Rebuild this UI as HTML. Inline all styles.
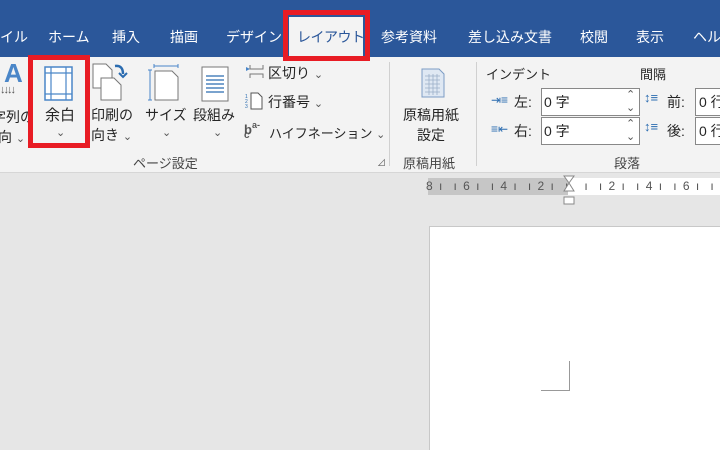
<!DOCTYPE html>
<html><head><meta charset="utf-8"><style>
*{margin:0;padding:0;box-sizing:border-box}
html,body{width:720px;height:450px;overflow:hidden}
body{position:relative;background:#e6e6e6;font-family:"Liberation Sans","Noto Sans CJK JP",sans-serif;color:#262626}
.a{position:absolute;white-space:nowrap}
.tab{position:absolute;top:27px;color:#fff;font-size:14px;line-height:20px;white-space:nowrap}
.t{font-size:14px;line-height:18px}
.s{font-size:13px}
.chev{font-size:11px;color:#555}
</style></head><body>
<div class="a" style="left:0;top:0;width:720px;height:57px;background:#2b579a"></div>
<div class="a" style="left:0;top:57px;width:720px;height:116px;background:#f3f3f3;border-bottom:1px solid #d6d6d6"></div>
<!-- tabs -->
<div class="tab" style="left:0">イル</div>
<div class="tab" style="left:48px">ホーム</div>
<div class="tab" style="left:112px">挿入</div>
<div class="tab" style="left:170px">描画</div>
<div class="tab" style="left:226px">デザイン</div>
<div class="a" style="left:289px;top:17px;width:74px;height:40px;background:#f3f3f3"></div>
<div class="tab" style="left:297px;color:#2b579a;letter-spacing:-0.5px">レイアウト</div>
<div class="a" style="left:283px;top:10px;width:87px;height:51px;border:5px solid #e81c24"></div>
<div class="tab" style="left:381px">参考資料</div>
<div class="tab" style="left:468px">差し込み文書</div>
<div class="tab" style="left:580px">校閲</div>
<div class="tab" style="left:636px">表示</div>
<div class="tab" style="left:693px">ヘルプ</div>
<!-- ribbon left -->
<div class="a" style="left:4px;top:58px;font-size:26px;color:#4a86c8;font-weight:bold">A</div>
<div class="a" style="left:0;top:84px;font-size:11px;color:#555;letter-spacing:-2px">↓↓↓↓</div>
<div class="a t" style="left:-8px;top:108px">字列の</div>
<div class="a t" style="left:-2px;top:128px">向 <span class="chev">⌄</span></div>
<svg class="a" style="left:44px;top:66px" width="30" height="36"><rect x="1" y="1" width="27" height="33" fill="#fff" stroke="#4a86c8" stroke-width="1.5"/><path d="M7 1V34M22 1V34M1 7H28M1 28H28" stroke="#4a86c8" stroke-width="1.2"/></svg>
<div class="a" style="left:45px;top:104px;font-size:15px">余白</div>
<div class="a chev" style="left:56px;top:126px">⌄</div>
<div class="a" style="left:28px;top:55px;width:62px;height:93px;border:5px solid #e81c24"></div>
<svg class="a" style="left:92px;top:62px" width="40" height="40"><path d="M1 2H14L20 8V26H1Z" fill="#fff" stroke="#777"/><path d="M9 16H22L29 23V38H9Z" fill="#fff" stroke="#777"/><path d="M23 4Q31 3 31 12" stroke="#2b6cb0" stroke-width="2.5" fill="none"/><path d="M27 11L31 15L35 11" stroke="#2b6cb0" stroke-width="2" fill="none"/></svg>
<div class="a t" style="left:91px;top:106px">印刷の</div>
<div class="a t" style="left:91px;top:126px">向き <span class="chev">⌄</span></div>
<svg class="a" style="left:148px;top:64px" width="34" height="38"><path d="M6 2H30M6 0V4M30 0V4M2 6V36M0 6H4M0 36H4" stroke="#4a86c8"/><path d="M7 7H24L30 13V36H7Z" fill="#fff" stroke="#777"/></svg>
<div class="a t" style="left:145px;top:106px">サイズ</div>
<div class="a chev" style="left:162px;top:126px">⌄</div>
<svg class="a" style="left:201px;top:66px" width="28" height="36"><rect x="1" y="1" width="26" height="34" fill="#fff" stroke="#777"/><path d="M5 10H23M5 14H23M5 18H23M5 22H23M5 26H23" stroke="#2b6cb0" stroke-width="1.2"/></svg>
<div class="a t" style="left:193px;top:106px">段組み</div>
<div class="a chev" style="left:213px;top:126px">⌄</div>
<svg class="a" style="left:245px;top:64px" width="20" height="18"><path d="M1 3L5 5L1 7Z" fill="#4a86c8"/><path d="M5 1V5H18V1M5 14V10H18V14" stroke="#777" fill="none"/></svg>
<div class="a t" style="left:268px;top:64px">区切り <span class="chev">⌄</span></div>
<svg class="a" style="left:245px;top:92px" width="20" height="18"><text x="0" y="6" font-size="5" fill="#2b6cb0">1</text><text x="0" y="11" font-size="5" fill="#2b6cb0">2</text><text x="0" y="16" font-size="5" fill="#2b6cb0">3</text><path d="M6 1H13L17 5V17H6Z" fill="#fff" stroke="#555"/></svg>
<div class="a t" style="left:268px;top:93px">行番号 <span class="chev">⌄</span></div>
<div class="a" style="left:244px;top:120px;font-size:13px;color:#555;font-weight:bold">b<span style="font-size:9px;vertical-align:6px">a-</span></div>
<div class="a" style="left:244px;top:130px;font-size:10px;color:#555;font-weight:bold">c</div>
<div class="a s" style="left:269px;top:123px">ハイフネーション <span class="chev">⌄</span></div>
<div class="a s" style="left:133px;top:153px;color:#444">ページ設定</div>
<div class="a" style="left:377px;top:156px;font-size:9px;color:#666">⊿</div>
<div class="a" style="left:389px;top:62px;width:1px;height:104px;background:#d0d0d0"></div>
<svg class="a" style="left:421px;top:68px" width="24" height="30"><path d="M1 1H18L23 6V29H1Z" fill="#dfe8f3" stroke="#7c9cc4"/><path d="M4 8H19M4 12H19M4 16H19M4 20H19M4 24H19M8 6V27M12 6V27M16 6V27" stroke="#9aaec8" stroke-width="0.8"/></svg>
<div class="a t" style="left:403px;top:106px">原稿用紙</div>
<div class="a t" style="left:417px;top:126px">設定</div>
<div class="a s" style="left:403px;top:153px;color:#444">原稿用紙</div>
<div class="a" style="left:476px;top:62px;width:1px;height:104px;background:#d0d0d0"></div>
<div class="a s" style="left:486px;top:64px">インデント</div>
<div class="a s" style="left:640px;top:64px">間隔</div>
<div class="a" style="left:491px;top:93px;font-size:12px;color:#2b6cb0">⇥≡</div>
<div class="a t" style="left:514px;top:93px">左:</div>
<div class="a" style="left:541px;top:88px;width:99px;height:28px;background:#fff;border:1px solid #888"></div>
<div class="a t" style="left:544px;top:93px">0 字</div>
<div class="a chev" style="left:626px;top:88px">⌃</div>
<div class="a chev" style="left:626px;top:101px">⌄</div>
<div class="a" style="left:491px;top:122px;font-size:12px;color:#2b6cb0">≡⇤</div>
<div class="a t" style="left:514px;top:122px">右:</div>
<div class="a" style="left:541px;top:117px;width:99px;height:28px;background:#fff;border:1px solid #888"></div>
<div class="a t" style="left:544px;top:122px">0 字</div>
<div class="a chev" style="left:626px;top:117px">⌃</div>
<div class="a chev" style="left:626px;top:130px">⌄</div>
<div class="a" style="left:644px;top:90px;font-size:13px;color:#2b6cb0">↕≡</div>
<div class="a t" style="left:667px;top:93px">前:</div>
<div class="a" style="left:695px;top:88px;width:30px;height:28px;background:#fff;border:1px solid #888"></div>
<div class="a t" style="left:699px;top:93px">0 行</div>
<div class="a" style="left:644px;top:119px;font-size:13px;color:#2b6cb0">↕≡</div>
<div class="a t" style="left:667px;top:122px">後:</div>
<div class="a" style="left:695px;top:117px;width:30px;height:28px;background:#fff;border:1px solid #888"></div>
<div class="a t" style="left:699px;top:122px">0 行</div>
<div class="a s" style="left:614px;top:153px;color:#444">段落</div>
<!-- ruler -->
<div class="a" style="left:428px;top:178px;width:140px;height:17px;background:#c6c6c6"></div>
<div class="a" style="left:568px;top:178px;width:152px;height:17px;background:#fff"></div>
<div class="a" style="left:426px;top:179px;font-size:12px;color:#555;letter-spacing:1.5px;font-family:'Liberation Sans',sans-serif">8 ı&nbsp; ı 6 ı&nbsp; ı 4 ı&nbsp; ı 2 ı&nbsp; ı&nbsp;&nbsp; ı&nbsp; ı 2 ı&nbsp; ı 4 ı&nbsp; ı 6 ı&nbsp; ı 8</div>
<svg class="a" style="left:563px;top:175px" width="12" height="30"><path d="M1 1H11L6 8L11 16H1L6 8Z" fill="#fff" stroke="#888"/><rect x="1" y="22" width="10" height="7" fill="#fff" stroke="#888"/></svg>
<!-- page -->
<div class="a" style="left:429px;top:226px;width:300px;height:230px;background:#fff;border:1px solid #c8c8c8"></div>
<div class="a" style="left:569px;top:361px;width:1px;height:30px;background:#999"></div>
<div class="a" style="left:541px;top:390px;width:29px;height:1px;background:#999"></div>
</body></html>
